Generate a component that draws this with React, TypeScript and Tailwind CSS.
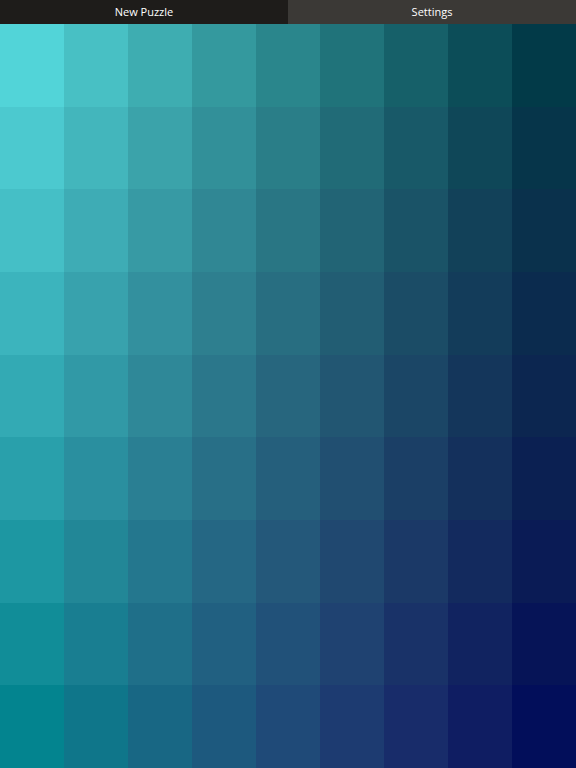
import React from "react"

type RGB = [number, number, number]

// 3x3 control colours sampled from the board (top / middle / bottom rows)
const control: RGB[][] = [
  [[82, 212, 216], [42, 134, 140], [2, 58, 72]],
  [[51, 170, 180], [39, 102, 126], [12, 38, 80]],
  [[3, 132, 143], [31, 74, 120], [2, 14, 90]],
]

const SIZE = 9

const weights = (t: number) => [2 * (t - 0.5) * (t - 1), -4 * t * (t - 1), 2 * t * (t - 0.5)]

const colorAt = (row: number, col: number) => {
  const wy = weights(row / (SIZE - 1))
  const wx = weights(col / (SIZE - 1))
  const out = [0, 0, 0]
  for (let i = 0; i < 3; i++) {
    for (let j = 0; j < 3; j++) {
      for (let k = 0; k < 3; k++) out[k] += wy[i] * wx[j] * control[i][j][k]
    }
  }
  const c = out.map((v) => Math.max(0, Math.min(255, Math.round(v))))
  return `rgb(${c[0]}, ${c[1]}, ${c[2]})`
}

export default function App() {
  const cells = []
  for (let r = 0; r < SIZE; r++) {
    for (let c = 0; c < SIZE; c++) {
      cells.push(<div key={`${r}-${c}`} style={{ backgroundColor: colorAt(r, c) }} />)
    }
  }

  return (
    <div className="flex h-[768px] w-[576px] flex-col overflow-hidden font-['Open_Sans','Noto_Sans',sans-serif]">
      {/* top bar */}
      <div className="flex h-6 shrink-0 text-[11px] text-white">
        <button className="flex flex-1 items-center justify-center bg-[#1e1c1a]">New Puzzle</button>
        <button className="flex flex-1 items-center justify-center bg-[#3b3936]">Settings</button>
      </div>

      {/* colour board */}
      <div className="grid flex-1 grid-cols-9 grid-rows-9">{cells}</div>
    </div>
  )
}
